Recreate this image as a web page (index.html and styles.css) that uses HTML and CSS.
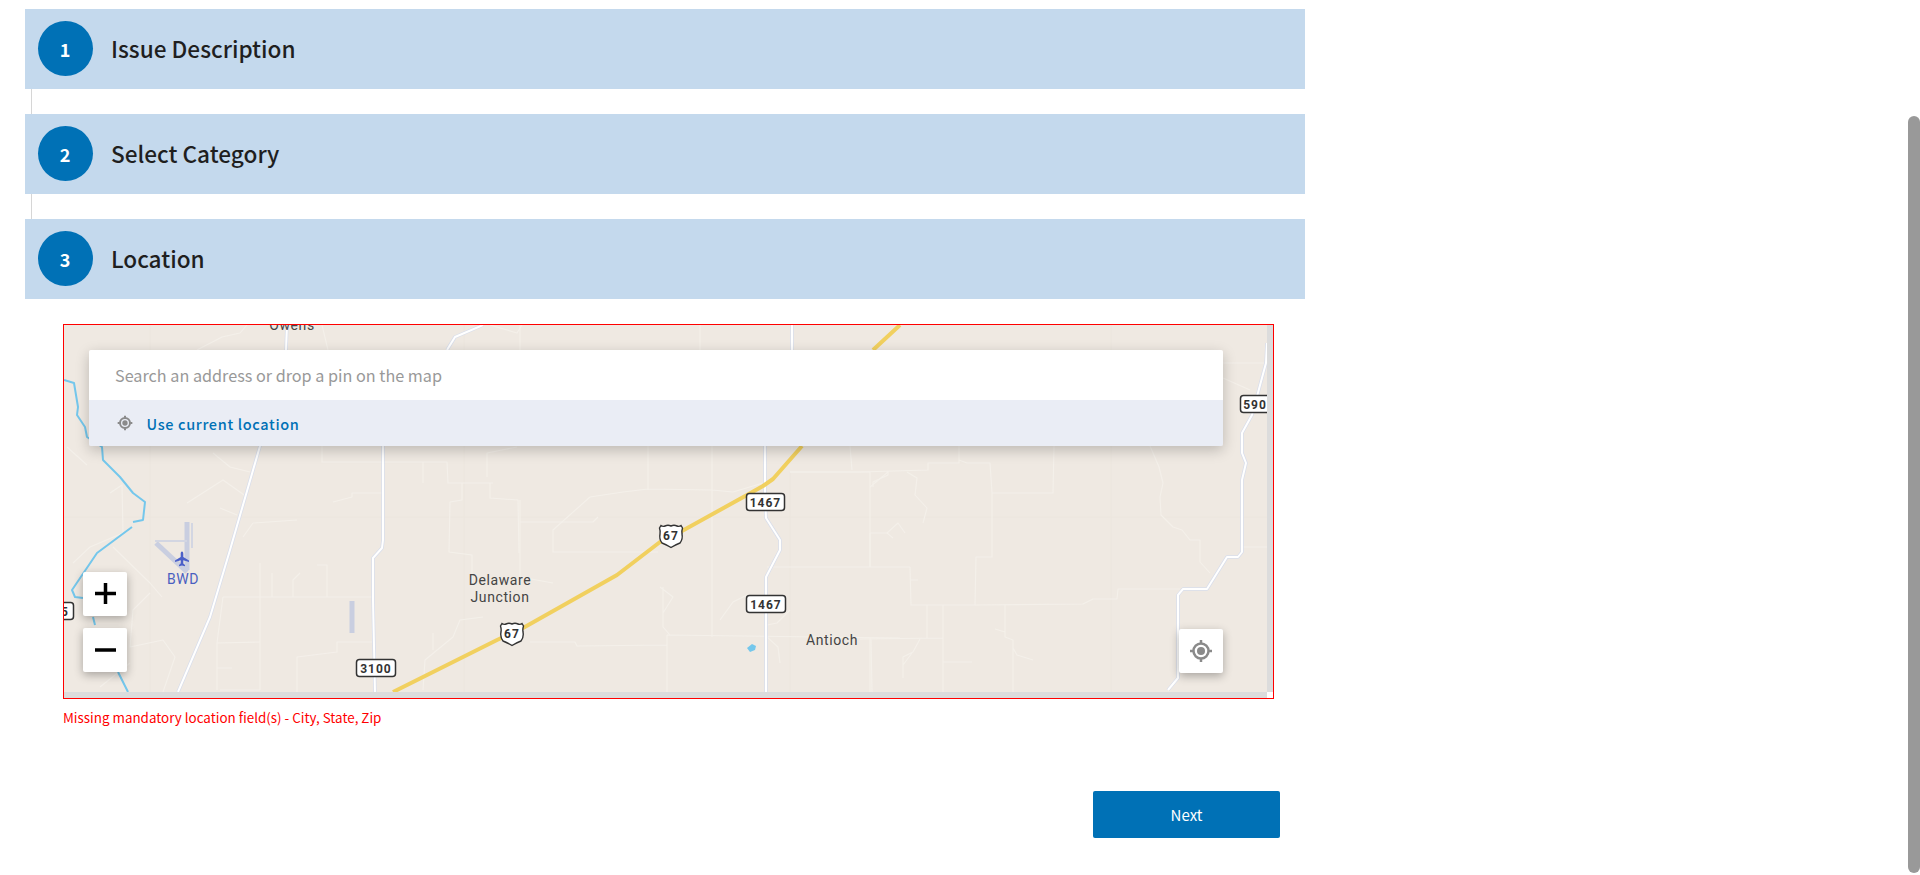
FILE: index.html
```html
<!DOCTYPE html>
<html lang="en">
<head>
    <meta charset="UTF-8">
    <meta name="viewport" content="width=device-width, initial-scale=1.0">
    <title>Report an Issue</title>
    <link rel="stylesheet" href="styles.css">
</head>
<body>
    <div class="container">
        <div class="step">
            <span class="step-number">1</span>
            <h2 class="step-title">Issue Description</h2>
        </div>
        <div class="step-line"></div>
        <div class="step">
            <span class="step-number">2</span>
            <h2 class="step-title">Select Category</h2>
        </div>
        <div class="step-line"></div>
        <div class="step">
            <span class="step-number">3</span>
            <h2 class="step-title">Location</h2>
        </div>

        <div class="map-box">
            <div class="map-view">
                <svg class="map-canvas" width="1203" height="367" viewBox="64 325 1203 367">
                    <defs>
                        <path id="roadWest" d="M287 325 L286 350 L260 446 L230 550 L210 617 L178 692"/>
                        <path id="roadMid" d="M447 350 L455 337 L483 325 M383 446 V540 L382 548 L373 558 V600 L375 692"/>
                        <path id="roadCentral" d="M792 325 V350 M765 446 V495 L766 518 L780 540 V550 L766 577 V692"/>
                        <path id="roadEast" d="M1267 343 L1266 363 L1252 415 L1242 433 V453 L1246 463 L1242 480 V552 L1238 557 H1227 L1207 589 H1183 L1178 595 V678 L1168 690"/>
                    </defs>

                    <g class="grid-lines">
                        <path d="M64 517 H1267 M150 325 V692 M464 325 V692 M790 472 V692 M1111 325 V692"/>
                    </g>

                    <g class="road-minor">
                        <path d="M322 446 V462 H447 L448 483 H493 M423 462 V483 M462 483 V500 L450 502 L449 552 L472 555 V583"/>
                        <path d="M490 483 V498 L518 500 L519 553 M520 522 H593 L598 517 M333 502 L352 497 V493 H382"/>
                        <path d="M487 477 V453 L517 447 M253 523 L297 520 M253 523 L243 537 M187 503 L223 480 L247 497"/>
                        <path d="M220 508 L237 515 M213 453 L230 467 L250 472 M67 447 L87 465 M110 493 L122 485 L123 533 L90 547 L73 563"/>
                        <path d="M113 547 L150 583 L162 597 M197 350 L222 337 L240 333 L247 325 M322 325 L328 350 M490 325 L517 333 L522 325"/>
                        <path d="M223 597 H372 M260 563 V690 M272 573 V597 M293 597 V580 L300 573 M317 565 H327 V597"/>
                        <path d="M217 643 L260 642 M223 597 L217 643 V690 M217 668 H232 M220 690 H260 M297 692 V657 L337 652 V642 H372"/>
                        <path d="M150 593 L133 610 L130 647 L163 640 L175 657 L163 692 M100 687 L130 663 M423 690 L425 660 L453 637 L460 620 L483 617 M433 633 V650"/>
                        <path d="M520 325 V350 M700 325 V350 M648 446 V490 M712 446 V637 M590 497 L623 492 L648 489 L712 490 L733 492 L763 483"/>
                        <path d="M590 497 L553 530 V552 H658 M520 500 V577 L553 583 M530 642 H575 L577 646 L667 645 M667 635 L900 638 M667 635 V692"/>
                        <path d="M663 587 V627 L670 635 M660 587 L673 597 L663 613 M720 620 L733 602 L747 595 M767 567 H910 M790 472 H870 M870 472 V567"/>
                        <path d="M850 446 L852 470 M870 533 H887 L898 523 L905 533 M887 533 L893 538 M873 487 V482 L888 475 V471 M907 472 L917 478 L915 495 L927 508 L923 523"/>
                        <path d="M767 637 L778 647 L780 663 M767 625 L777 623 L790 610 M790 472 H860 L928 470 V463 H959 V446 M959 460 L967 463 H990 L992 493 V557 H976 L975 605 H911 L910 567"/>
                        <path d="M992 493 H1053 L1054 446 M975 605 L1083 604 L1093 599 H1117 L1118 589 H1180 M927 605 V638 M943 605 V692 M860 639 L943 638 M871 639 L872 692 M943 662 H972"/>
                        <path d="M1005 605 V637 L1013 640 V692 M995 629 L1005 632 M1013 648 L1017 655 L1033 660 M920 639 L913 652 L903 657 V678 M903 665 L912 653 M910 580 H918"/>
                        <path d="M1150 446 L1159 467 L1163 483 L1160 497 L1161 515 L1173 527 L1182 530 L1190 540 H1200 V562 L1210 573 M1243 547 H1267 M1223 378 L1250 390 M1223 363 H1266"/>
                        <path d="M870 487 L888 472 M870 533 V567 M870 638 V692"/>
                    </g>

                    <g class="airport">
                        <path class="runway" d="M187 522 V570"/>
                        <path class="runway" d="M156 543 L187 572"/>
                        <path class="taxiway" d="M155 541 H187 M192 523 V548"/>
                        <path class="runway" d="M352 601 V633"/>
                    </g>

                    <path class="river" d="M64 380 L74 383 L78 407 L77 415 L85 427 L87 437 L102 447 L103 460 L120 477 L133 493 L145 502 L143 520 L133 522"/>
                    <path class="river" d="M132 527 L97 553 L72 590 L75 597 L83 598 M93 617 L95 625 M118 672 L128 692"/>
                    <path class="pond" d="M747 648 L752 644 L756 646 L755 650 L750 652 Z"/>

                    <g class="road-casing">
                        <use href="#roadWest"/><use href="#roadMid"/><use href="#roadCentral"/><use href="#roadEast"/>
                    </g>
                    <g class="road-main">
                        <use href="#roadWest"/><use href="#roadMid"/><use href="#roadCentral"/><use href="#roadEast"/>
                    </g>

                    <path class="highway" d="M900 325 L873 350 M802 446 L773 479 L763 486 L747 495 L682 531 L660 542 L617 575 L523 628 L497 640 L393 692"/>

                    <text class="map-label" x="292" y="330">Owens</text>
                    <text class="map-label" x="500" y="585">Delaware</text>
                    <text class="map-label" x="500" y="602">Junction</text>
                    <text class="map-label" x="832" y="645">Antioch</text>
                    <text class="map-label airport-label" x="183" y="584">BWD</text>

                    <path class="plane" transform="translate(182 559)" d="M0-7.5 C1-7.5 1.3-6.5 1.3-5 V-2 L7 1.5 V3 L1.3 1.2 V4.5 L3 6 V7.3 L0 6.5 L-3 7.3 V6 L-1.3 4.5 V1.2 L-7 3 V1.5 L-1.3-2 V-5 C-1.3-6.5 -1-7.5 0-7.5Z"/>

                    <g class="road-sign">
                        <rect x="356.500" y="659.500" width="39" height="17" rx="3"/>
                        <text x="376" y="672.500">3100</text>
                        <rect x="746.500" y="493.500" width="38" height="17" rx="3"/>
                        <text x="765.500" y="506.500">1467</text>
                        <rect x="746.500" y="595.500" width="39" height="17" rx="3"/>
                        <text x="766" y="608.500">1467</text>
                        <rect x="1240.500" y="395.500" width="36" height="17" rx="3"/>
                        <text x="1255" y="408.500">590</text>
                        <rect x="40.500" y="602.500" width="33" height="17" rx="3"/>
                        <text x="57" y="615.500">175</text>
                    </g>

                    <g class="us-shield" transform="translate(671 536)">
                        <path d="M-10-10.500 Q-8-9 -6-10 Q-3-11.500 0-10 Q3-11.500 6-10 Q8-9 10-10.500 L11.500-8 Q10.500-5 11-2 Q12 3 9 7 Q4 9 0 11.500 Q-4 9 -9 7 Q-12 3 -11-2 Q-10.500-5 -11.500-8 Z"/>
                        <text y="4">67</text>
                    </g>
                    <g class="us-shield" transform="translate(512 634)">
                        <path d="M-10-10.500 Q-8-9 -6-10 Q-3-11.500 0-10 Q3-11.500 6-10 Q8-9 10-10.500 L11.500-8 Q10.500-5 11-2 Q12 3 9 7 Q4 9 0 11.500 Q-4 9 -9 7 Q-12 3 -11-2 Q-10.500-5 -11.500-8 Z"/>
                        <text y="4">67</text>
                    </g>
                </svg>

                <div class="search-panel">
                    <div class="search-input">Search an address or drop a pin on the map</div>
                    <div class="search-option">
                        <svg class="locate-icon" width="16" height="16" viewBox="0 0 24 24">
                            <circle cx="12" cy="12" r="7.500" fill="none" stroke-width="3"/>
                            <circle cx="12" cy="12" r="4" stroke="none"/>
                            <path d="M12 1 V4 M12 20 V23 M1 12 H4 M20 12 H23" stroke-width="3"/>
                        </svg>
                        <span>Use current location</span>
                    </div>
                </div>

                <div class="zoom-controls">
                    <div class="map-button">
                        <svg width="22" height="22" viewBox="0 0 22 22"><path class="zoom-mark" d="M1 10.500 H22 M11.500 0 V21"/></svg>
                    </div>
                    <div class="map-button">
                        <svg width="22" height="22" viewBox="0 0 22 22"><path class="zoom-mark" d="M1 11 H22"/></svg>
                    </div>
                </div>

                <div class="map-button locate-button">
                    <svg class="locate-icon" width="24" height="24" viewBox="0 0 24 24">
                        <circle cx="12" cy="12" r="7.500" fill="none" stroke-width="2.500"/>
                        <circle cx="12" cy="12" r="4" stroke="none"/>
                        <path d="M12 1 V4 M12 20 V23 M1 12 H4 M20 12 H23" stroke-width="2.500"/>
                    </svg>
                </div>
            </div>
            <div class="map-scroll-y"></div>
            <div class="map-scroll-x"></div>
        </div>

        <p class="error-text">Missing mandatory location field(s) - City, State, Zip</p>

        <div class="actions">
            <button class="next-button">Next</button>
        </div>
    </div>

    <div class="page-scrollbar"></div>
</body>
</html>
```

FILE: styles.css
```css
body {
    font-family: "Noto Sans CJK SC", "Noto Sans", sans-serif;
    margin: 0;
    padding: 0;
    height: 875px;
    overflow: hidden;
    background-color: #fff;
}

.container {
    width: 1280px;
    padding: 9px 0 0 25px;
}

.step {
    display: flex;
    align-items: center;
    height: 80px;
    padding-left: 13px;
    box-sizing: border-box;
    background-color: #c4d9ed;
}

.step-number {
    display: flex;
    align-items: center;
    justify-content: center;
    width: 54px;
    height: 55px;
    padding-right: 1px;
    margin-top: -1px;
    border-radius: 50%;
    background-color: #0071b6;
    color: #fff;
    font-size: 18px;
    font-weight: 700;
    line-height: 1;
}

.step-title {
    margin: 0 0 0 18px;
    font-size: 22.6px;
    font-weight: 500;
    line-height: 30px;
    color: #1f1f1f;
}

.step-line {
    width: 1px;
    height: 25px;
    margin-left: 6px;
    background-color: #d6d6d6;
}

.map-box {
    display: grid;
    grid-template-columns: 1203px 6px;
    grid-template-rows: 367px 6px;
    width: 1209px;
    margin: 25px 0 0 38px;
    border: 1px solid #f00;
}

.map-view {
    position: relative;
    overflow: hidden;
    background-color: #efe9e2;
}

.map-canvas {
    display: block;
}

.map-scroll-y {
    background-color: #dcdcdc;
}

.map-scroll-x {
    background-color: #dcdcdc;
}

.grid-lines path {
    fill: none;
    stroke: #ece6de;
    stroke-width: 1;
}

.road-minor path {
    fill: none;
    stroke: #f4f0ea;
    stroke-width: 1.1;
    stroke-linejoin: round;
}

.road-casing {
    fill: none;
    stroke: #d9deeb;
    stroke-width: 3.5;
    stroke-linejoin: round;
}

.road-main {
    fill: none;
    stroke: #fff;
    stroke-width: 2;
    stroke-linejoin: round;
}

.highway {
    fill: none;
    stroke: #f1d05f;
    stroke-width: 4;
    stroke-linejoin: round;
}

.river {
    fill: none;
    stroke: #74c7ec;
    stroke-width: 2;
    stroke-linejoin: round;
}

.pond {
    fill: #74c7ec;
}

.runway {
    fill: none;
    stroke: #c9cee0;
    stroke-width: 5;
}

.taxiway {
    fill: none;
    stroke: #d3d6e2;
    stroke-width: 2;
}

.plane {
    fill: #4a5fc8;
}

.map-label {
    font-family: Roboto, sans-serif;
    font-size: 14px;
    letter-spacing: 0.6px;
    fill: #444;
    text-anchor: middle;
}

.airport-label {
    fill: #4a5fc0;
}

.road-sign rect {
    fill: #fff;
    stroke: #333;
    stroke-width: 1.5;
}

.road-sign text,
.us-shield text {
    font-family: Roboto, sans-serif;
    font-size: 12px;
    font-weight: 700;
    letter-spacing: 1px;
    fill: #333;
    text-anchor: middle;
}

.us-shield path {
    fill: #fff;
    stroke: #333;
    stroke-width: 1.4;
}

.search-panel {
    position: absolute;
    left: 25px;
    top: 25px;
    width: 1134px;
    border-radius: 2px;
    overflow: hidden;
    box-shadow: 0 4px 14px rgba(0, 0, 0, 0.22);
}

.search-input {
    height: 50px;
    padding-left: 26px;
    background-color: #fff;
    color: #999;
    font-size: 16.2px;
    line-height: 50px;
}

.search-option {
    display: flex;
    align-items: center;
    height: 46px;
    padding-left: 28px;
    background-color: #eaedf5;
    color: #0071b6;
    font-size: 14.5px;
    font-weight: 500;
    letter-spacing: 0.65px;
}

.search-option span {
    margin-left: 13.500px;
}

.locate-icon {
    fill: #8a8a8a;
    stroke: #8a8a8a;
}

.zoom-controls {
    position: absolute;
    left: 19px;
    top: 247px;
    display: flex;
    flex-direction: column;
    gap: 12px;
}

.map-button {
    display: flex;
    align-items: center;
    justify-content: center;
    width: 44px;
    height: 44px;
    border-radius: 2px;
    background-color: #fff;
    box-shadow: 0 3px 10px rgba(0, 0, 0, 0.3);
}

.zoom-mark {
    fill: none;
    stroke: #000;
    stroke-width: 3.5;
}

.locate-button {
    position: absolute;
    left: 1115px;
    top: 304px;
}

.error-text {
    margin: 8px 0 0 38px;
    color: #f00;
    font-size: 13.4px;
    line-height: 20px;
}

.actions {
    display: flex;
    justify-content: flex-end;
    margin: 64px 25px 0 0;
}

.next-button {
    width: 187px;
    height: 47px;
    border: none;
    border-radius: 2px;
    background-color: #0071b6;
    color: #fff;
    font-family: inherit;
    font-size: 15px;
    font-weight: 400;
    cursor: pointer;
}

.page-scrollbar {
    position: absolute;
    right: 0;
    top: 116px;
    width: 12px;
    height: 757px;
    border-radius: 6px;
    background-color: #999;
}
```
